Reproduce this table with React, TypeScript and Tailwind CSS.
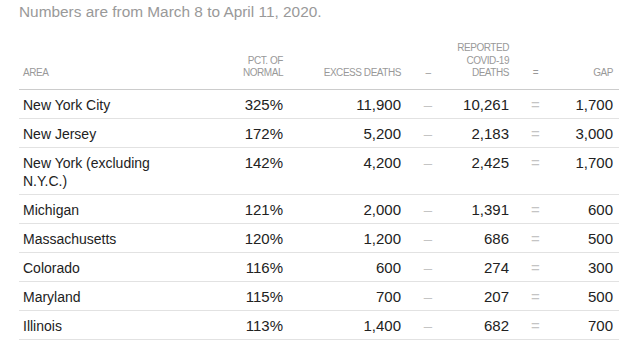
import React from 'react';

interface Row {
  area: string;
  pct: string;
  excess: string;
  reported: string;
  gap: string;
}

const rows: Row[] = [
  { area: 'New York City', pct: '325%', excess: '11,900', reported: '10,261', gap: '1,700' },
  { area: 'New Jersey', pct: '172%', excess: '5,200', reported: '2,183', gap: '3,000' },
  { area: 'New York (excluding N.Y.C.)', pct: '142%', excess: '4,200', reported: '2,425', gap: '1,700' },
  { area: 'Michigan', pct: '121%', excess: '2,000', reported: '1,391', gap: '600' },
  { area: 'Massachusetts', pct: '120%', excess: '1,200', reported: '686', gap: '500' },
  { area: 'Colorado', pct: '116%', excess: '600', reported: '274', gap: '300' },
  { area: 'Maryland', pct: '115%', excess: '700', reported: '207', gap: '500' },
  { area: 'Illinois', pct: '113%', excess: '1,400', reported: '682', gap: '700' },
];

const th = 'align-bottom font-normal uppercase text-[10px] leading-[12.5px] tracking-[-0.45px] text-[#999] pb-[9.5px] border-b border-[#ccc]';
const td = 'align-top pt-[6px] pb-[4px] leading-[18px] border-b border-[#e2e2e2]';

const App: React.FC = () => {
  return (
    <div className="w-[641px] h-[361px] bg-white pl-[19px] font-['Liberation_Sans',Arial,sans-serif] overflow-hidden">
      {/* Intro line */}
      <div className="pt-[2px] text-[15.4px] leading-[20px] text-[#999]">
        Numbers are from March 8 to April 11, 2020.
      </div>

      <table className="mt-[20px] w-[600px] table-fixed border-collapse">
        <colgroup>
          <col className="w-[171px]" />
          <col className="w-[93px]" />
          <col className="w-[118px]" />
          <col className="w-[54px]" />
          <col className="w-[54px]" />
          <col className="w-[53px]" />
          <col className="w-[57px]" />
        </colgroup>
        <thead>
          <tr>
            <th className={`${th} text-left pl-[4px]`}>Area</th>
            <th className={`${th} text-right`}>
              Pct. of
              <br />
              normal
            </th>
            <th className={`${th} text-right whitespace-nowrap`}>Excess deaths</th>
            <th className={`${th} text-center`}>–</th>
            <th className={`${th} text-right`}>
              Reported
              <br />
              Covid-19
              <br />
              deaths
            </th>
            <th className={`${th} text-center`}>=</th>
            <th className={`${th} text-right pr-[6px]`}>Gap</th>
          </tr>
        </thead>
        <tbody>
          {rows.map((r) => (
            <tr key={r.area}>
              <td className={`${td} pl-[4px] pr-[10px] text-[14px] text-[#222]`}>{r.area}</td>
              <td className={`${td} text-right text-[15px] text-[#222]`}>{r.pct}</td>
              <td className={`${td} text-right text-[15px] text-[#222]`}>{r.excess}</td>
              <td className={`${td} text-center text-[15px] text-[#c4c4c4]`}>–</td>
              <td className={`${td} text-right text-[15px] text-[#222]`}>{r.reported}</td>
              <td className={`${td} text-center text-[15px] text-[#c4c4c4]`}>=</td>
              <td className={`${td} text-right pr-[6px] text-[15px] text-[#222]`}>{r.gap}</td>
            </tr>
          ))}
        </tbody>
      </table>
    </div>
  );
};

export default App;
